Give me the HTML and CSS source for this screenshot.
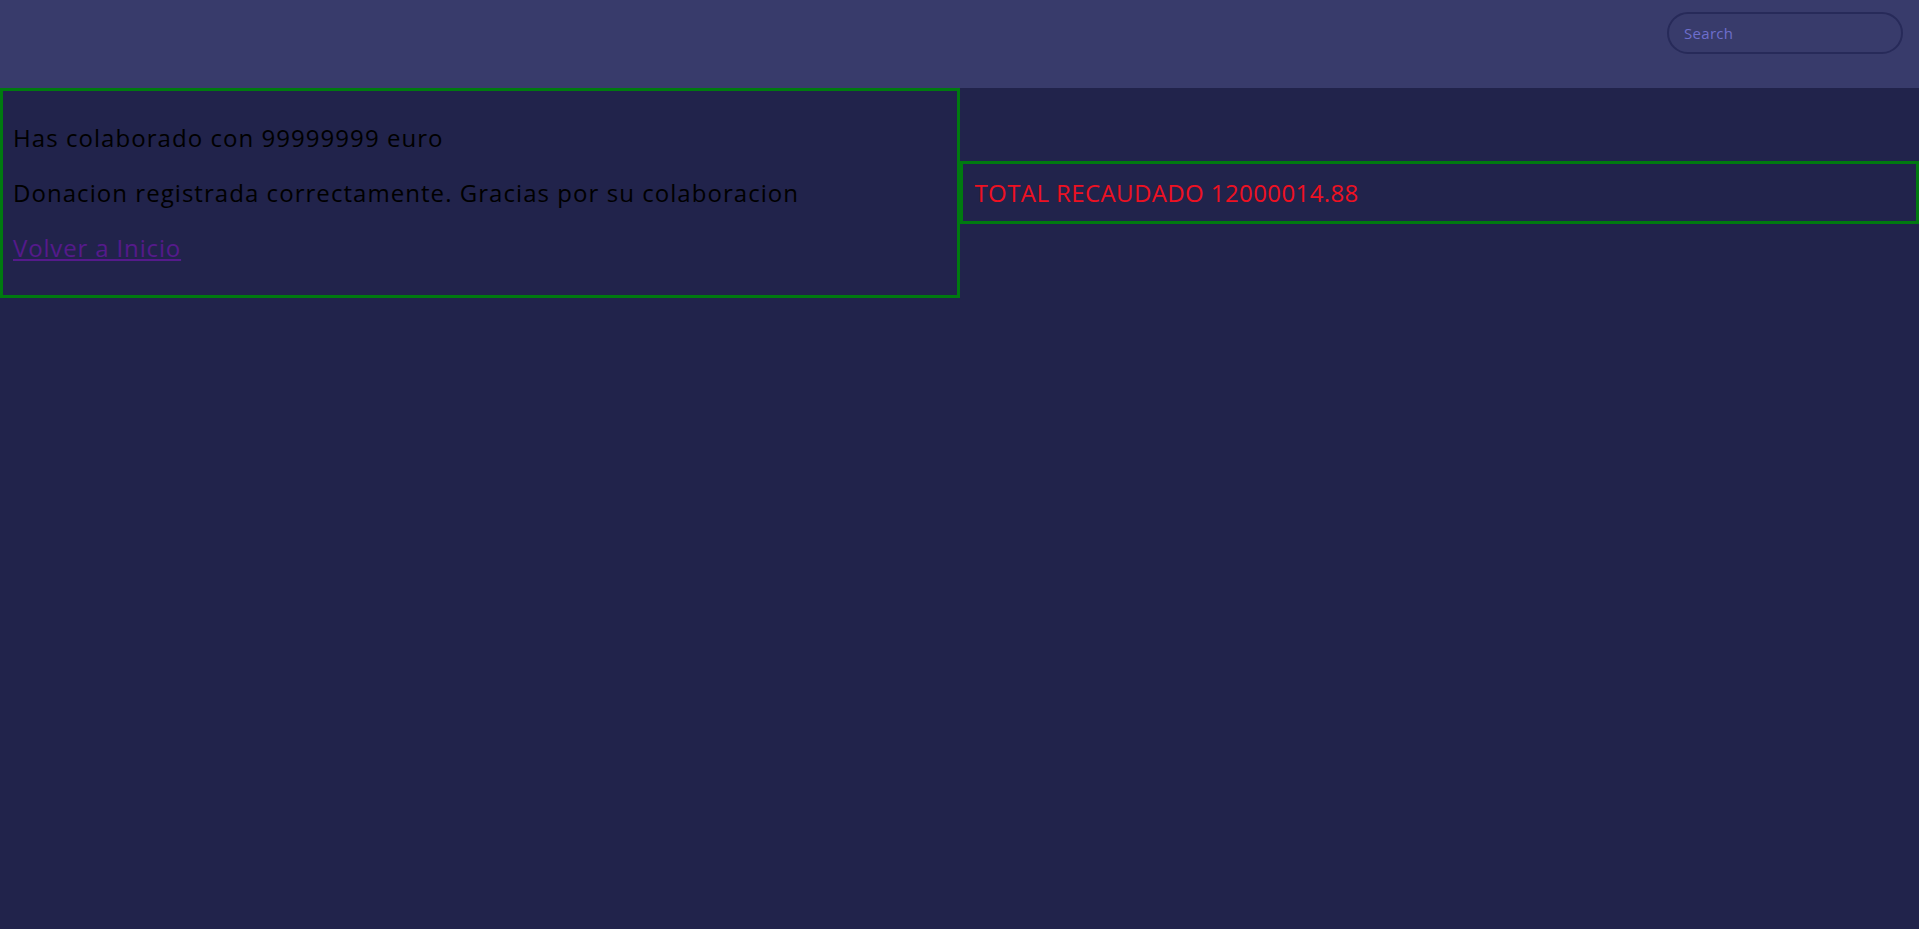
FILE: index.html
```html
<!DOCTYPE html>
<html lang="es">
<head>
<meta charset="utf-8">
<title>Donacion</title>
<link rel="stylesheet" href="styles.css">
</head>
<body>
<header class="topbar">
  <input class="search" type="text" placeholder="Search">
</header>
<main class="content">
  <section class="panel panel-left">
    <p class="line">Has colaborado con 99999999 euro</p>
    <p class="line">Donacion registrada correctamente. Gracias por su colaboracion</p>
    <p class="line"><a class="back" href="#">Volver a Inicio</a></p>
  </section>
  <section class="panel panel-right">
    <p class="total">TOTAL RECAUDADO 12000014.88</p>
  </section>
</main>
</body>
</html>
```

FILE: styles.css
```css
* { box-sizing: border-box; }
html, body {
  margin: 0;
  padding: 0;
  height: 100%;
}
body {
  background: #21234b;
  font-family: "Open Sans", "Noto Sans", sans-serif;
  color: #000;
}
.topbar {
  height: 88px;
  background: #383b6b;
  display: flex;
  justify-content: flex-end;
  align-items: flex-start;
  padding: 12px 16px 0 0;
}
.search {
  width: 236px;
  height: 42px;
  border-radius: 21px;
  border: 2px solid #272a59;
  background: transparent;
  padding: 0 15px;
  font-family: "Open Sans", sans-serif;
  font-size: 15px;
  letter-spacing: 0.3px;
  color: #7a7ad0;
  outline: none;
}
.search::placeholder { color: #6e6ecb; }
.content {
  display: flex;
  align-items: flex-start;
}
.panel {
  width: 50%;
  border: 3px solid #007a10;
}
.panel-left {
  padding: 29px 10px 29px;
  display: flex;
  flex-direction: column;
  gap: 19px;
}
.line {
  margin: 0;
  font-size: 24px;
  line-height: 36px;
  letter-spacing: 1.05px;
}
.back {
  color: #551a8b;
  text-decoration: underline;
  letter-spacing: 0.85px;
}
.panel-right {
  margin-top: 73px;
  padding: 0 12px;
}
.total {
  margin: 0;
  font-size: 24px;
  line-height: 57px;
  letter-spacing: 0.4px;
  color: #ee1122;
}
```
